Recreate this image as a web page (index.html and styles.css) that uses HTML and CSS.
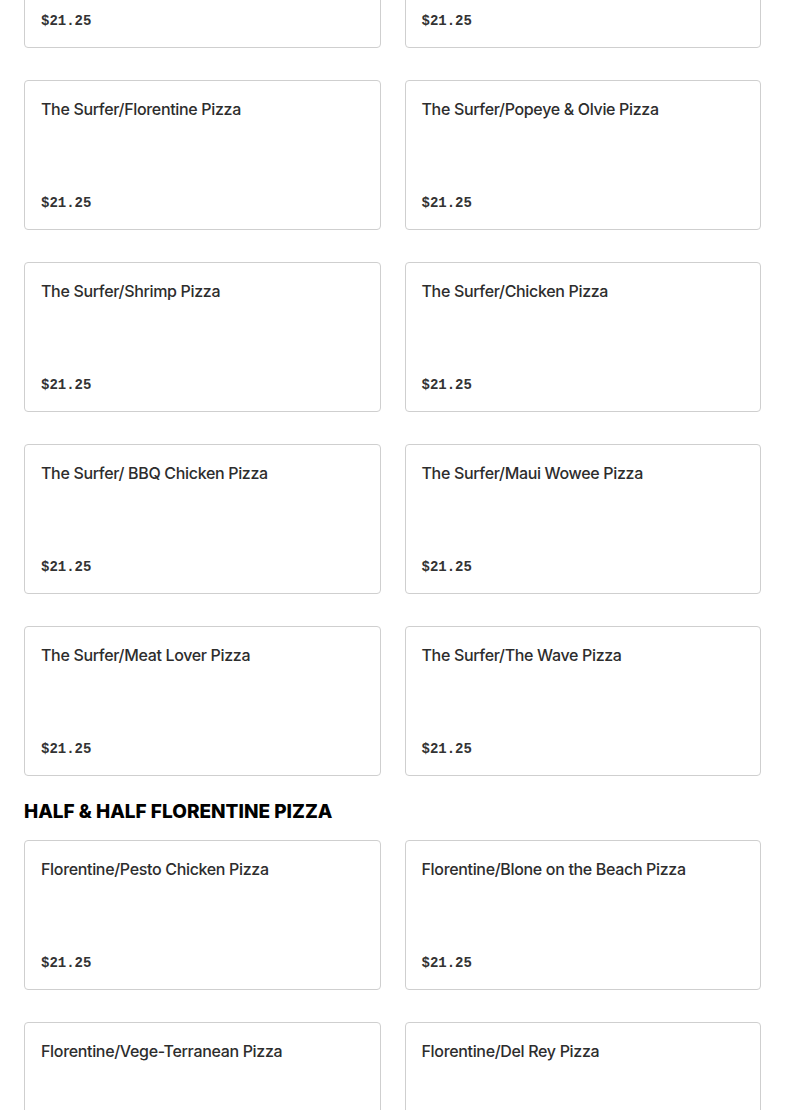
FILE: index.html
```html
<!DOCTYPE html>
<html lang="en">
<head>
    <meta charset="UTF-8">
    <title>Menu</title>
    <link rel="stylesheet" href="styles.css">
</head>
<body>
    <div class="menu">
        <section class="section first">
            <div class="grid">
                <div class="card"><div class="name">The Surfer/Pesto Chicken Pizza</div><div class="price">$21.25</div></div>
                <div class="card"><div class="name">The Surfer/Blone on the Beach Pizza</div><div class="price">$21.25</div></div>
                <div class="card"><div class="name">The Surfer/Florentine Pizza</div><div class="price">$21.25</div></div>
                <div class="card"><div class="name">The Surfer/Popeye &amp; Olvie Pizza</div><div class="price">$21.25</div></div>
                <div class="card"><div class="name">The Surfer/Shrimp Pizza</div><div class="price">$21.25</div></div>
                <div class="card"><div class="name">The Surfer/Chicken Pizza</div><div class="price">$21.25</div></div>
                <div class="card"><div class="name">The Surfer/ BBQ Chicken Pizza</div><div class="price">$21.25</div></div>
                <div class="card"><div class="name">The Surfer/Maui Wowee Pizza</div><div class="price">$21.25</div></div>
                <div class="card"><div class="name">The Surfer/Meat Lover Pizza</div><div class="price">$21.25</div></div>
                <div class="card"><div class="name">The Surfer/The Wave Pizza</div><div class="price">$21.25</div></div>
            </div>
        </section>
        <section class="section">
            <h2>HALF &amp; HALF FLORENTINE PIZZA</h2>
            <div class="grid">
                <div class="card"><div class="name">Florentine/Pesto Chicken Pizza</div><div class="price">$21.25</div></div>
                <div class="card"><div class="name">Florentine/Blone on the Beach Pizza</div><div class="price">$21.25</div></div>
                <div class="card"><div class="name">Florentine/Vege-Terranean Pizza</div><div class="price">$21.25</div></div>
                <div class="card"><div class="name">Florentine/Del Rey Pizza</div><div class="price">$21.25</div></div>
            </div>
        </section>
    </div>
</body>
</html>
```

FILE: styles.css
```css
/* page */
body {
    margin: 0;
    background: #fff;
    color: #2d2d2d;
    font-family: Inter, "Liberation Sans", sans-serif;
}
.menu {
    padding: 0 24px;
    margin-top: -102px; /* page is scrolled */
}
.section {
    margin-top: 24px;
}
.section.first {
    margin-top: 0;
}
h2 {
    margin: 0 0 16px;
    font-size: 19px;
    line-height: 24px;
    font-weight: 800;
    color: #000;
}

/* cards */
.grid {
    display: grid;
    grid-template-columns: 1fr 1fr;
    gap: 32px 24px;
}
.card {
    height: 150px;
    box-sizing: border-box;
    border: 1px solid #cfcfcf;
    border-radius: 4px;
    padding: 16px;
    display: flex;
    flex-direction: column;
    justify-content: space-between;
}
.name {
    font-size: 16px;
    line-height: 24px;
    font-weight: 500;
    letter-spacing: -0.33px;
}
.price {
    font-family: "Liberation Mono", monospace;
    font-size: 14px;
    line-height: 20px;
    font-weight: bold;
    color: #333;
}
```
